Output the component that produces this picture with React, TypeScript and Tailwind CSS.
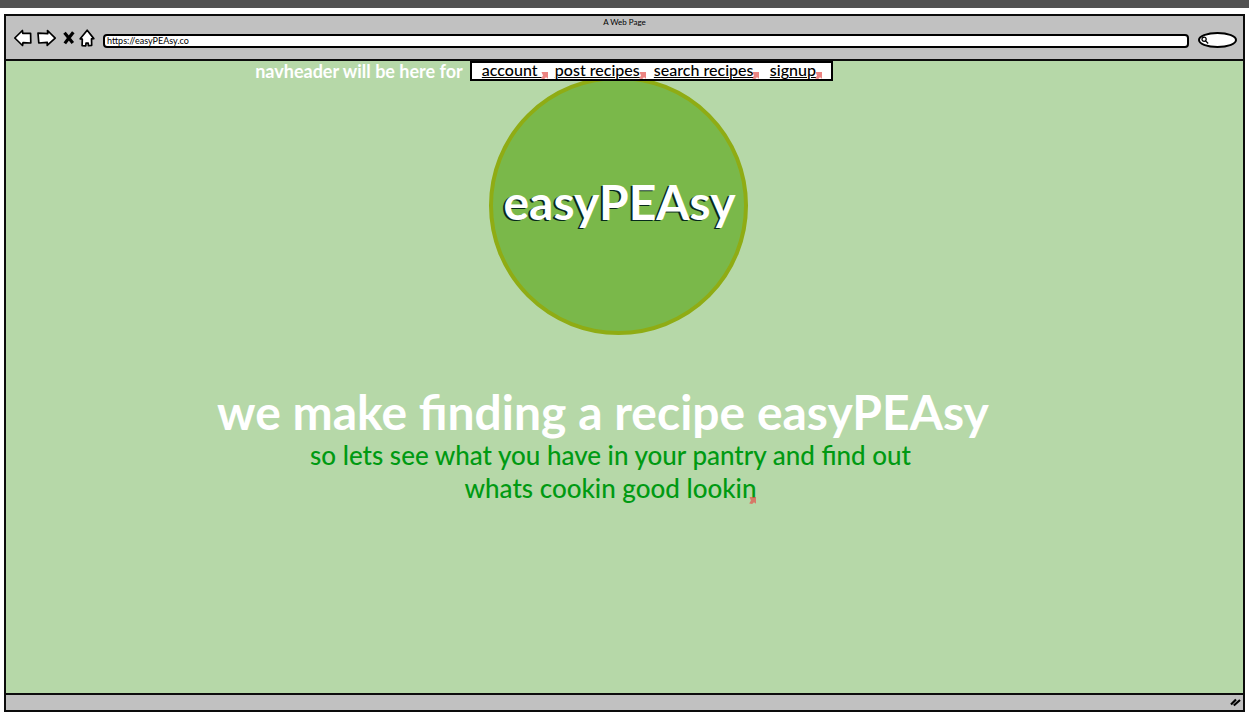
import React from "react";

const links = [
  { label: "account\u00a0", width: "w-[73px]" },
  { label: "post recipes", width: "w-[99px]" },
  { label: "search recipes", width: "w-[116px]" },
  { label: "signup", width: "w-[61px]" },
];

function LinkMark({ className }: { className: string }) {
  return (
    <svg viewBox="0 0 7 7" className={`absolute h-[7px] w-[7px] ${className}`} aria-hidden="true">
      <path d="M0.5 0H7V6.8L5 5.2L3.2 7L0.2 6.4L2 3.4Z" fill="#e4504c" fillOpacity="0.7" />
    </svg>
  );
}

function BrowserBar() {
  const button = "flex h-5 shrink-0 items-center justify-center";
  return (
    <header className="h-[45px] border-b-2 border-[#0c0c0c] bg-[#c1c1c1]">
      <h1 className="text-center text-[8px] leading-[12px] text-black">A Web Page</h1>
      <div className="-mt-[1px] flex items-center pr-[6px] pl-[8px]">
        <button aria-label="Back" className={`${button} w-[20px]`}>
          <svg viewBox="0 0 20 18" className="h-[18px] w-[20px]" fill="white" stroke="black" strokeWidth="1.7" strokeLinejoin="round">
            <path d="M0.8 9L8.4 1.5L8.8 4.4L16.6 4.4L16.8 14L9 13.6L8.5 16.5Z" />
          </svg>
        </button>
        <button aria-label="Forward" className={`${button} ml-[3px] w-[20px]`}>
          <svg viewBox="0 0 20 18" className="h-[18px] w-[20px]" fill="white" stroke="black" strokeWidth="1.7" strokeLinejoin="round">
            <path d="M1 4.2L10.8 4.7L10.5 1.5L18.2 9.2L10.2 16.4L10.3 13.4L1.8 14Z" />
          </svg>
        </button>
        <button aria-label="Stop" className={`${button} ml-[6px] w-[12px]`}>
          <svg viewBox="0 0 12 14" className="h-[14px] w-[12px]" fill="none" stroke="black" strokeWidth="3.2">
            <path d="M1.5 1.8L4 4.8L9.8 12M10.3 1.2L6.4 6.3L1.8 12.4" />
          </svg>
        </button>
        <button aria-label="Home" className={`${button} ml-[4px] w-[16px]`}>
          <svg viewBox="0 0 16 18" className="h-[18px] w-[16px]" fill="white" stroke="black" strokeWidth="1.7" strokeLinejoin="round">
            <path d="M8.2 1.2L1.2 9.8L3.3 10.2L3.1 16.6L6.8 16.8L7 14.2L9.2 14.1L9.4 16.7L12.7 16.4L12.5 9.9L14.8 9.6Z" />
          </svg>
        </button>
        <input
          aria-label="Address"
          defaultValue="https://easyPEAsy.co"
          className="mt-[6px] ml-[8px] h-[14px] min-w-0 flex-1 rounded-[4px] border-2 border-black bg-white px-[2px] text-[9px] leading-[10px] text-black outline-none"
        />
        <div className="relative mt-[5px] ml-[9px] w-[39px] shrink-0">
          <input
            aria-label="Search"
            type="search"
            className="block h-[16px] w-full rounded-[50%] border-2 border-black bg-white pl-[12px] text-[8px] outline-none"
          />
          <svg viewBox="0 0 8 8" className="absolute top-[4px] left-[3px] h-[8px] w-[8px]" fill="none" stroke="black" strokeWidth="1.3" aria-hidden="true">
            <circle cx="3.1" cy="3.2" r="2.1" />
            <path d="M4.4 4.8L7.2 7.4" />
          </svg>
        </div>
      </div>
    </header>
  );
}

export default function App() {
  return (
    <div className="flex min-h-screen flex-col bg-white font-['Lato',sans-serif]">
      <div className="h-[8px] bg-[#525252]" />
      <div className="mx-[4px] mt-[6px] mb-[10px] flex flex-1 flex-col border-2 border-[#0c0c0c]">
        <BrowserBar />
        <main className="flex-1 bg-[#b6d8a8]">
          <div className="relative z-10 flex items-center justify-center pr-[161px]">
            <p className="mr-[7px] text-[18px] leading-[20px] font-bold text-white">navheader will be here for</p>
            <nav className="flex h-[20px] border-2 border-black bg-white pl-[10px] text-[16px] leading-[14px] font-medium text-black">
              {links.map((link) => (
                <span key={link.label} className={link.width}>
                  <a href="#" className="relative inline-block whitespace-nowrap underline decoration-1 underline-offset-1">
                    {link.label}
                    <LinkMark className="-right-[6px] -bottom-[2px]" />
                  </a>
                </span>
              ))}
            </nav>
          </div>
          <div className="-mt-[5px] flex justify-center pr-[12px]">
            <div className="flex h-[259px] w-[259px] items-center justify-center rounded-full border-4 border-[#8fac14] bg-[#7ab84a] pb-[8px] pl-[2px] text-[48px] leading-[56px] font-bold text-white [text-shadow:-2px_1px_0_#06291b]">
              easyPEAsy
            </div>
          </div>
          <h2 className="mt-[50px] pr-[43px] text-center text-[48px] leading-[54px] font-bold text-white">
            we make finding a recipe easyPEAsy
          </h2>
          <p className="pr-[28px] text-center text-[26px] leading-[33px] font-medium text-[#009a12]">
            so lets see what you have in your pantry and find out
            <br />
            <a href="#" className="relative inline-block">
              whats cookin good lookin
              <LinkMark className="right-0 bottom-[1px]" />
            </a>
          </p>
        </main>
        <footer className="flex h-[17px] items-center justify-end border-t-2 border-[#0c0c0c] bg-[#c1c1c1] pr-[2px]">
          <svg viewBox="0 0 11 9" className="h-[9px] w-[11px]" fill="none" stroke="black" strokeWidth="2.2" aria-hidden="true">
            <path d="M1 6.5L6 1.5M3.8 7.5L10 2" />
          </svg>
        </footer>
      </div>
    </div>
  );
}
